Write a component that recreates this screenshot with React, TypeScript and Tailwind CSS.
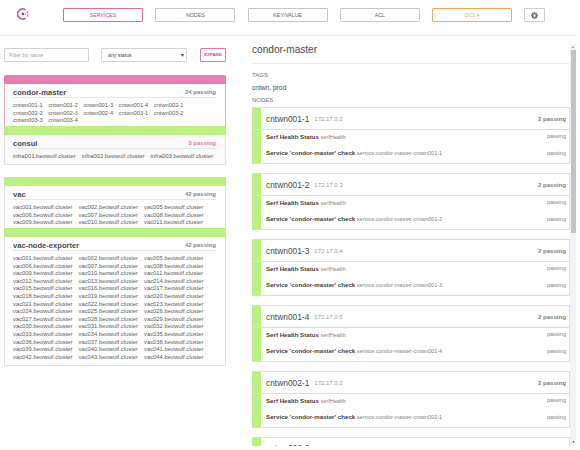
import React from "react";

const NAV_ITEMS = ["SERVICES", "NODES", "KEY/VALUE", "ACL"];

const CONDOR_NODES = [
  "cntwn001-1", "cntwn001-2", "cntwn001-3", "cntwn001-4", "cntwn002-1",
  "cntwn002-2", "cntwn002-3", "cntwn002-4", "cntwn003-1", "cntwn003-2",
  "cntwn003-3", "cntwn003-4",
];

const CONSUL_NODES = ["infra001", "infra002", "infra003"];

const VAC_IDS = [
  1, 2, 5, 6, 7, 8, 9, 10, 11, 12, 13, 14, 15, 16, 17, 18, 19, 20, 21, 22, 23,
  24, 25, 26, 27, 28, 29, 30, 31, 32, 33, 34, 35, 36, 37, 38, 39, 40, 41, 42, 43, 44,
];
const VAC_NODES = VAC_IDS.map((id) => `vac${String(id).padStart(3, "0")}`);

const CHECKS = [
  { name: "cntwn001-1", ip: "172.17.0.2" },
  { name: "cntwn001-2", ip: "172.17.0.3" },
  { name: "cntwn001-3", ip: "172.17.0.4" },
  { name: "cntwn001-4", ip: "172.17.0.5" },
  { name: "cntwn002-1", ip: "172.17.0.2" },
];

/**
 * Consul mark: open ring, centre dot and trailing dots
 */
const Logo: React.FC = () => (
  <svg viewBox="0 0 24 24" className="w-3 h-3 flex-shrink-0">
    <path d="M17 20.2A10 10 0 1 1 17 3.8" fill="none" stroke="#d04b93" strokeWidth="3" />
    <circle cx="12" cy="12" r="2.7" fill="#9c2f6c" />
    <circle cx="17.3" cy="12" r="1.3" fill="#d6609c" />
    <circle cx="21.2" cy="8.2" r="1.6" fill="#d6609c" />
    <circle cx="22" cy="12" r="1.3" fill="#d6609c" />
    <circle cx="21.2" cy="15.8" r="1.6" fill="#d6609c" />
  </svg>
);

const Gear: React.FC = () => (
  <svg viewBox="0 0 24 24" className="w-[7px] h-[7px]">
    <circle cx="12" cy="12" r="7" fill="none" stroke="#757575" strokeWidth="5" />
    <path
      d="M12 0v4M12 20v4M0 12h4M20 12h4M3.5 3.5 7 7M17 17l3.5 3.5M20.5 3.5 17 7M7 17l-3.5 3.5"
      stroke="#757575"
      strokeWidth="4.5"
    />
  </svg>
);

const NavBar: React.FC = () => (
  <nav className="flex h-9 w-[576px] items-start border-b border-[#eeeeee] pt-2 text-[5.3px] leading-none">
    <div className="ml-[17px] w-[46px]">
      <Logo />
    </div>
    <div className="flex gap-[12.3px]">
      {NAV_ITEMS.map((item, i) => (
        <button
          type="button"
          key={item}
          className={
            i === 0
              ? "h-3.5 w-20 rounded-[1px] border border-[#dc6b9f] pt-px text-[#d0428a]"
              : "h-3.5 w-20 rounded-[1px] border border-[#c6c6c6] pt-px text-[#5f5f5f]"
          }
        >
          {item}
        </button>
      ))}
      <button type="button" className="h-3.5 w-20 rounded-[1px] border border-[#f7a75c] pt-px text-[#f3ab69]">
        DC1 ▾
      </button>
      <button
        type="button"
        className="flex h-3.5 w-[21px] items-center justify-center rounded-[1px] border border-[#cccccc]"
      >
        <Gear />
      </button>
    </div>
  </nav>
);

const Filters: React.FC = () => (
  <div className="flex h-3.5 text-[5.6px] leading-none">
    <div className="flex w-[85px] items-center rounded-[1px] border border-[#d2d2d2] pt-px pl-1 text-[#a0a0a0]">
      <span className="text-[5.4px]">Filter by name</span>
    </div>
    <div className="ml-3 flex w-[86px] items-center justify-between rounded-[1px] border border-[#d2d2d2] pt-px pr-[2px] pl-1.5 text-[#444444]">
      <span className="text-[5.2px]">any status</span>
      <svg viewBox="0 0 4 4" className="h-[3px] w-[3px]">
        <path d="M0 0h4L2 4z" fill="#444444" />
      </svg>
    </div>
    <button
      type="button"
      className="ml-[13px] w-[26px] rounded-[1px] border border-[#df77a8] pt-px text-[4.3px] font-bold text-[#d0428a]"
    >
      EXPAND
    </button>
  </div>
);

interface ServiceProps {
  name: string;
  status: string;
  failing?: boolean;
  children: React.ReactNode;
}

const ServiceHeading: React.FC<ServiceProps> = ({ name, status, failing, children }) => (
  <div className="pr-[9px] pl-2">
    <div className="flex h-3.5 items-center justify-between border-b border-[#e6e6e6] pt-0.5 leading-none">
      <span className="pt-[2px] text-[7.6px] font-bold text-[#4a4a4a]">{name}</span>
      <span className={failing ? "text-[6px] font-bold text-[#e178a8]" : "text-[6px] font-bold text-[#868686]"}>
        {status}
      </span>
    </div>
    {children}
  </div>
);

const VacGrid: React.FC<{ nodes: string[] }> = ({ nodes }) => (
  <div className="grid grid-cols-[65.5px_65.5px_65.5px] pt-1 text-[5.85px] leading-[7.6px] whitespace-nowrap text-[#5c5c5c]">
    {nodes.map((node) => (
      <span key={node}>{node}.beowulf.cluster</span>
    ))}
  </div>
);

const ServiceList: React.FC = () => (
  <aside className="w-[222px] flex-shrink-0">
    <Filters />
    <section className="mt-[13px] h-[90px] rounded-[2px] bg-white">
      <div className="h-[9px] rounded-t-[2px] bg-[#e77db3]" />
      <div className="h-[42px] border-x border-[#e9a0c6]">
        <ServiceHeading name="condor-master" status="24 passing">
          <div className="grid grid-cols-[35.2px_35.2px_35.2px_35.2px_35.2px] pt-1 text-[5.75px] leading-[7.6px] text-[#5c5c5c]">
            {CONDOR_NODES.map((node) => (
              <span key={node}>{node}</span>
            ))}
          </div>
        </ServiceHeading>
      </div>
      <div className="h-[9px] bg-[#bcf085]" />
      <div className="h-[30px] rounded-b-[2px] border border-t-0 border-[#dedede] bg-[#fafafa]">
        <ServiceHeading name="consul" status="3 passing" failing>
          <div className="flex gap-[6px] pt-1 text-[5.95px] leading-[7.6px] whitespace-nowrap text-[#5c5c5c]">
            {CONSUL_NODES.map((node) => (
              <span key={node}>{node}.beowulf.cluster</span>
            ))}
          </div>
        </ServiceHeading>
      </div>
    </section>
    <section className="mt-3 h-[189px] rounded-[2px]">
      <div className="h-[9px] rounded-t-[1px] bg-[#bcf085]" />
      <div className="h-[42px] border-x border-[#dedede]">
        <ServiceHeading name="vac" status="42 passing">
          <VacGrid nodes={VAC_NODES.slice(0, 9)} />
        </ServiceHeading>
      </div>
      <div className="h-[9px] bg-[#bcf085]" />
      <div className="h-[129px] rounded-b-[2px] border border-t-0 border-[#dedede]">
        <ServiceHeading name="vac-node-exporter" status="42 passing">
          <VacGrid nodes={VAC_NODES} />
        </ServiceHeading>
      </div>
    </section>
  </aside>
);

const NodeCard: React.FC<{ name: string; ip: string }> = ({ name, ip }) => (
  <div className="mb-[9px] h-[57px] flex-shrink-0 border border-l-0 border-[#dddddd] leading-none">
    <div className="flex h-[22px] items-center border-b border-[#dddddd]">
      <div className="h-full w-[9px] bg-[#bcf085]" />
      <span className="ml-[5px] pt-px text-[8.4px] text-[#484848]">{name}</span>
      <span className="ml-[5px] pt-px text-[6px] text-[#989898]">{ip}</span>
      <span className="mr-[3px] ml-auto pt-px text-[6.1px] font-bold text-[#808080]">2 passing</span>
    </div>
    <div className="flex h-[33px]">
      <div className="w-[9px] bg-[#bcf085]" />
      <div className="flex flex-1 flex-col pr-[3px] pl-[5px] text-[5.55px] text-[#858585]">
        <div className="flex h-3.5 items-center justify-between">
          <span>
            <b className="text-[6.15px] text-[#404040]">Serf Health Status</b> serfHealth
          </span>
          <span>passing</span>
        </div>
        <div className="flex h-[19px] items-center justify-between">
          <span>
            <b className="text-[6.2px] text-[#404040]">Service 'condor-master' check</b> service:condor-master-{name}
          </span>
          <span>passing</span>
        </div>
      </div>
    </div>
  </div>
);

const Scrollbar: React.FC = () => (
  <div className="flex w-[6px] flex-col items-center justify-between bg-[#f3f3f3]">
    <div className="flex flex-col items-center">
      <svg viewBox="0 0 4 4" className="my-[2px] h-[2px] w-[2px]">
        <path d="M0 4h4L2 0z" fill="#888888" />
      </svg>
      <div className="h-[183px] w-[5px] bg-[#c3c3c3]" />
    </div>
    <svg viewBox="0 0 4 4" className="mb-[3px] h-[2px] w-[3px]">
      <path d="M0 0h4L2 4z" fill="#444444" />
    </svg>
  </div>
);

const ServiceDetail: React.FC = () => (
  <main className="-mt-1 ml-[26px] flex h-[402px] w-[324px]">
    <div className="flex w-[318px] flex-col overflow-hidden leading-none">
      <h1 className="h-5 flex-shrink-0 border-b border-[#eeeeee] text-[10.1px] leading-[11px] text-[#484848]">
        condor-master
      </h1>
      <div className="h-[43px] flex-shrink-0 pt-[7px] text-[6px] leading-[8px] text-[#6e6e6e]">
        <div>TAGS</div>
        <div className="py-1 text-[6.6px] leading-[9px] text-[#484848]">cntwn, prod</div>
        <div>NODES</div>
      </div>
      {CHECKS.map((check) => (
        <NodeCard key={check.name} {...check} />
      ))}
      {/* next card, only its top edge is scrolled into view */}
      <div className="flex h-[9px] flex-shrink-0 border-t border-r border-[#dddddd]">
        <div className="w-[9px] bg-[#bcf085]" />
        <span className="ml-[5px] pt-[6px] text-[8.4px] leading-[9px] text-[#484848]">cntwn002-2</span>
      </div>
    </div>
    <Scrollbar />
  </main>
);

export default function App() {
  return (
    <div className="h-[450px] w-[580px] overflow-hidden bg-white font-['Liberation_Sans',sans-serif]">
      <NavBar />
      <div className="flex pt-3 pl-1">
        <ServiceList />
        <ServiceDetail />
      </div>
    </div>
  );
}
